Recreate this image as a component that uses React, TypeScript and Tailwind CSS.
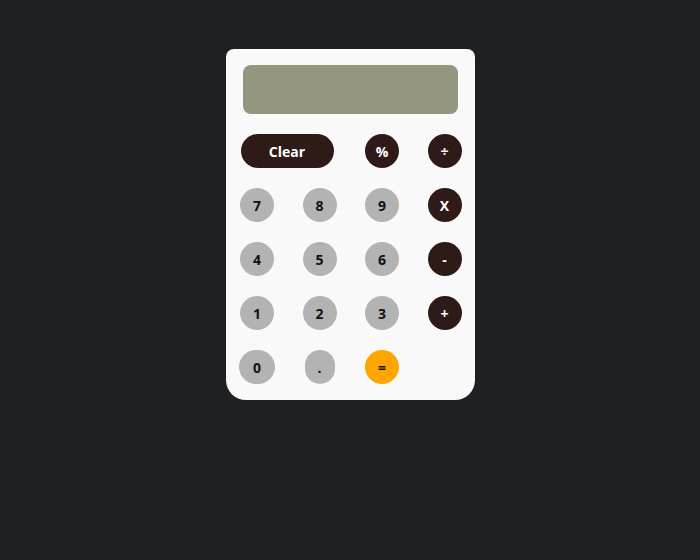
const dark = 'bg-[#2e1a17] text-white'
const gray = 'bg-[#b3b3b3] text-[#111]'

type Key = { label: string; cls: string; span?: boolean; w?: string }

const keys: Key[] = [
  { label: 'Clear', cls: dark, span: true },
  { label: '%', cls: dark },
  { label: '÷', cls: dark },
  { label: '7', cls: gray },
  { label: '8', cls: gray },
  { label: '9', cls: gray },
  { label: 'X', cls: dark },
  { label: '4', cls: gray },
  { label: '5', cls: gray },
  { label: '6', cls: gray },
  { label: '-', cls: dark },
  { label: '1', cls: gray },
  { label: '2', cls: gray },
  { label: '3', cls: gray },
  { label: '+', cls: dark },
  { label: '0', cls: gray, w: 'w-[36px]' },
  { label: '.', cls: gray, w: 'w-[30px]' },
  { label: '=', cls: 'bg-[#ffa500] text-[#111]' },
]

export default function App() {
  return (
    <div className="min-h-[560px] w-full bg-[#1f2024] pt-[49px] font-['Open_Sans',sans-serif]">
      <div className="mx-auto w-[249px] overflow-hidden rounded-t-[8px] rounded-b-[20px] bg-[#f9f9f9] pt-4 pb-[15px]">
        <div className="mx-[17px] h-[49px] rounded-[8px] bg-[#94967f]" />
        <div className="mt-5 grid w-[250px] grid-cols-[63px_62px_63px_62px] gap-y-5 pb-px">
          {keys.map((k) =>
            k.span ? (
              <div key={k.label} className="col-span-2 flex justify-start pl-[15px]">
                <button className={`h-[34px] w-[93px] rounded-full text-[14px] font-bold ${k.cls}`}>
                  {k.label}
                </button>
              </div>
            ) : (
              <div key={k.label} className="flex justify-center">
                <button
                  className={`flex h-[34px] ${k.w ?? 'w-[34px]'} items-center justify-center rounded-full text-[14px] font-bold ${k.cls}`}
                >
                  {k.label}
                </button>
              </div>
            ),
          )}
        </div>
      </div>
    </div>
  )
}
